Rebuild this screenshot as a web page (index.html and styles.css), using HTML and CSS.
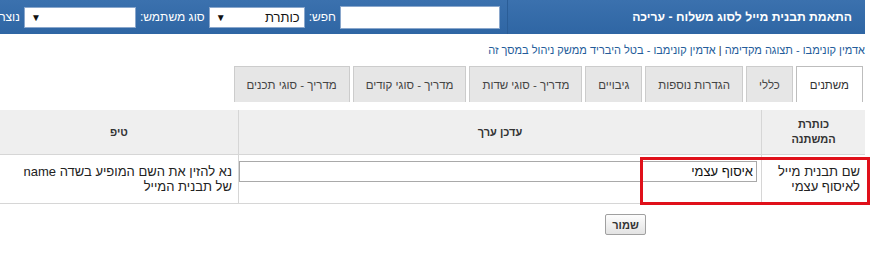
FILE: index.html
```html
<!DOCTYPE html>
<html lang="he">
<head>
<meta charset="utf-8">
<title>התאמת תבנית מייל לסוג משלוח - עריכה</title>
<link rel="stylesheet" href="styles.css">
</head>
<body>
<div class="page" dir="rtl">
  <header class="topbar">
    <h1 class="title">התאמת תבנית מייל לסוג משלוח - עריכה</h1>
    <div class="filters">
      <input class="search" type="text">
      <span class="flabel">חפש:</span>
      <div class="sel sel-field"><span class="sel-text">כותרת</span><span class="arr">▼</span></div>
      <span class="flabel">סוג משתמש:</span>
      <div class="sel sel-user"><span class="sel-text"></span><span class="arr">▼</span></div>
      <span class="flabel">נוצר ע"י:</span>
    </div>
  </header>

  <div class="crumbs">
    <a href="#">אדמין קונימבו - תצוגה מקדימה</a> | <a href="#">אדמין קונימבו - בטל היבריד ממשק ניהול במסך זה</a>
  </div>

  <nav class="tabs">
    <a class="tab active" href="#">משתנים</a>
    <a class="tab" href="#">כללי</a>
    <a class="tab" href="#">הגדרות נוספות</a>
    <a class="tab" href="#">גיבויים</a>
    <a class="tab" href="#">מדריך - סוגי שדות</a>
    <a class="tab" href="#">מדריך - סוגי קודים</a>
    <a class="tab" href="#">מדריך - סוגי תכנים</a>
  </nav>

  <div class="grid-wrap">
    <table class="grid">
      <thead>
        <tr>
          <th class="c-name">כותרת<br>המשתנה</th>
          <th class="c-val">עדכן ערך</th>
          <th class="c-tip">טיפ</th>
        </tr>
      </thead>
      <tbody>
        <tr>
          <td class="c-name">שם תבנית מייל לאיסוף עצמי</td>
          <td class="c-val"><input class="val-input" type="text" value="איסוף עצמי"></td>
          <td class="c-tip">נא להזין את השם המופיע בשדה name של תבנית המייל</td>
        </tr>
      </tbody>
    </table>
    <div class="highlight"></div>
  </div>

  <div class="actions">
    <button class="save" type="button">שמור</button>
  </div>
</div>
</body>
</html>
```

FILE: styles.css
```css
html, body {
  margin: 0;
  padding: 0;
  background: #ffffff;
}

body {
  font-family: "Liberation Sans", "DejaVu Sans", Arial, sans-serif;
  font-size: 12px;
  color: #222;
}

.page {
  width: 865px;
  overflow: visible;
}

/* ---------- top bar ---------- */
.topbar {
  display: flex;
  align-items: center;
  height: 34px;
  background: linear-gradient(to bottom, #3b71ae 0%, #2f66a4 100%);
  overflow: hidden;
  white-space: nowrap;
}

.title {
  flex: 0 0 auto;
  width: 344px;
  margin: 0;
  padding-right: 13px;
  height: 34px;
  line-height: 34px;
  font-size: 12.2px;
  font-weight: bold;
  color: #ffffff;
  border-left: 1px solid #2a5d97;
}

.filters {
  display: flex;
  align-items: center;
  gap: 4px;
  padding-right: 7px;
  flex: 0 0 auto;
}

.search {
  width: 156px;
  height: 19px;
  margin: 0;
  padding: 1px;
  border: 1px solid #8aa7cc;
  background: #fff;
}

.flabel {
  color: #ffffff;
  font-size: 12px;
}

.sel {
  display: flex;
  align-items: center;
  justify-content: space-between;
  height: 19px;
  padding: 0 4px 0 6px;
  background: #fff;
  border: 1px solid #8aa7cc;
  font-size: 13px;
  color: #111;
}

.sel .arr {
  font-size: 10px;
  color: #111;
}

.sel-field { width: 84px; }
.sel-user { width: 100px; }

/* ---------- breadcrumbs ---------- */
.crumbs {
  margin-top: 9px;
  height: 14px;
  line-height: 14px;
  color: #333;
  font-size: 11px;
}

.crumbs a {
  color: #245c9a;
  text-decoration: none;
}

/* ---------- tabs ---------- */
.tabs {
  display: flex;
  gap: 3px;
  margin-top: 9px;
  padding-right: 2px;
}

.tab {
  display: block;
  height: 35px;
  line-height: 36px;
  padding: 0 12px;
  background: #e6e6e6;
  border: 1px solid #cccccc;
  border-bottom: none;
  color: #444;
  text-decoration: none;
  font-size: 11.5px;
}

.tab.active {
  background: #ffffff;
  border-color: #bdbdbd;
  color: #333;
  padding: 0 13px;
}

/* ---------- grid ---------- */
.grid-wrap {
  position: relative;
  margin-top: 8px;
}

.grid {
  width: 865px;
  border-collapse: collapse;
  table-layout: fixed;
}

.grid th {
  height: 44px;
  background: #efefef;
  font-size: 11px;
  font-weight: bold;
  color: #333;
  text-align: center;
  line-height: 15px;
  padding: 0 4px;
  border-bottom: 1px solid #d6d6d6;
}

.grid tbody tr {
  height: 49px;
}

.grid td {
  padding: 0 4px;
  font-size: 13px;
  line-height: 15px;
  color: #222;
  vertical-align: middle;
  border-bottom: 1px solid #d6d6d6;
  text-align: right;
}

.grid .c-name {
  width: 95px;
  border-left: 1px solid #d6d6d6;
}

.grid .c-val {
  border-left: 1px solid #d6d6d6;
}

.grid td.c-val {
  vertical-align: top;
  padding: 6px 4px 0 2px;
}

.grid .c-tip {
  width: 230px;
}

.grid td.c-tip {
  padding-left: 14px;
  padding-right: 6px;
}

.grid td.c-name {
  padding-right: 5px;
  padding-left: 14px;
}

.val-input {
  display: block;
  box-sizing: border-box;
  width: 518px;
  height: 21px;
  margin: 0;
  padding: 0 3px;
  border: 1px solid #a9a9a9;
  font-family: inherit;
  font-size: 13px;
  color: #111;
  text-align: right;
}

.highlight {
  position: absolute;
  left: 640px;
  top: 47px;
  width: 224px;
  height: 42px;
  border: 3px solid #e0101a;
  pointer-events: none;
}

/* ---------- actions ---------- */
.actions {
  display: flex;
  padding-right: 219px;
  margin-top: 10px;
}

.save {
  width: 41px;
  height: 21px;
  padding: 0;
  font-family: inherit;
  font-size: 11px;
  font-weight: bold;
  color: #333;
  background: linear-gradient(to bottom, #fdfdfd 0%, #e3e3e3 100%);
  border: 1px solid #a0a0a0;
  border-radius: 2px;
}
```
